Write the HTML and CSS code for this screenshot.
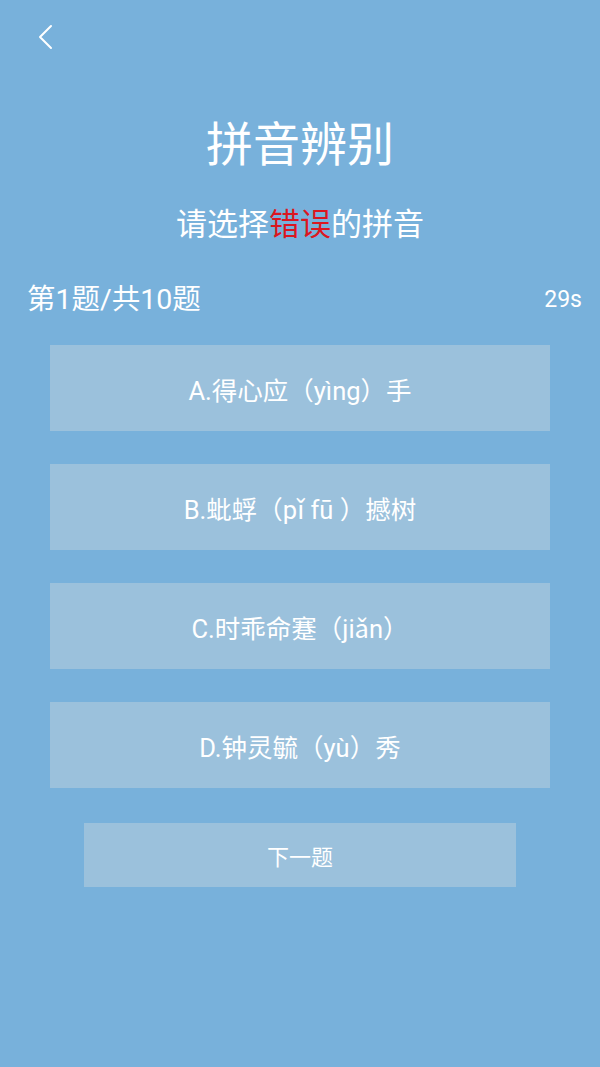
FILE: index.html
```html
<!DOCTYPE html>
<html lang="zh-CN">

<head>
    <meta charset="UTF-8" />
    <meta name="viewport" content="width=device-width, initial-scale=1.0" />
    <title>拼音辨别</title>
    <link rel="stylesheet" href="styles.css">
</head>

<body>

    <div class="topbar">
        <svg class="back" width="20" height="28" viewBox="0 0 20 28">
            <polyline points="15,3 4,14 15,25" fill="none" stroke="#fff" stroke-width="2" stroke-linecap="round" stroke-linejoin="round" />
        </svg>
    </div>

    <h1 class="title">拼音辨别</h1>
    <p class="subtitle">请选择<span class="wrong">错误</span>的拼音</p>

    <div class="progress">
        <span>第1题/共10题</span>
        <span class="timer">29s</span>
    </div>

    <div class="options">
        <div class="option">A.得心应（yìng）手</div>
        <div class="option">B.蚍蜉（pǐ fū ）撼树</div>
        <div class="option">C.时乖命蹇（jiǎn）</div>
        <div class="option">D.钟灵毓（yù）秀</div>
    </div>

    <div class="next-btn">下一题</div>

</body>

</html>
```

FILE: styles.css
```css
body {
    margin: 0;
    font-family: Roboto, "Noto Sans CJK SC", sans-serif;
    background-color: #78b1db;
    color: #fff;
    height: 1067px;
}

.topbar {
    height: 80px;
    padding-left: 36px;
    box-sizing: border-box;
}

.back {
    display: block;
    padding-top: 23px;
}

.title {
    margin: 35px 0 0;
    font-size: 47px;
    font-weight: 400;
    line-height: 60px;
    text-align: center;
}

.subtitle {
    margin: 30px 0 0;
    font-size: 31px;
    line-height: 40px;
    text-align: center;
}

.wrong {
    color: #dc1620;
}

.progress {
    display: flex;
    justify-content: space-between;
    align-items: center;
    margin-top: 35px;
    padding: 0 18px 0 27px;
    font-size: 28.5px;
    line-height: 40px;
}

.timer {
    font-size: 23px;
}

.options {
    display: flex;
    flex-direction: column;
    gap: 33px;
    margin: 25px 50px 0;
}

.option {
    height: 86px;
    background: #9bc1dc;
    display: flex;
    justify-content: center;
    align-items: center;
    font-size: 25.5px;
}

.next-btn {
    width: 432px;
    height: 64px;
    margin: 35px auto 0;
    background: #9bc1dc;
    display: flex;
    justify-content: center;
    align-items: center;
    font-size: 22px;
}
```
